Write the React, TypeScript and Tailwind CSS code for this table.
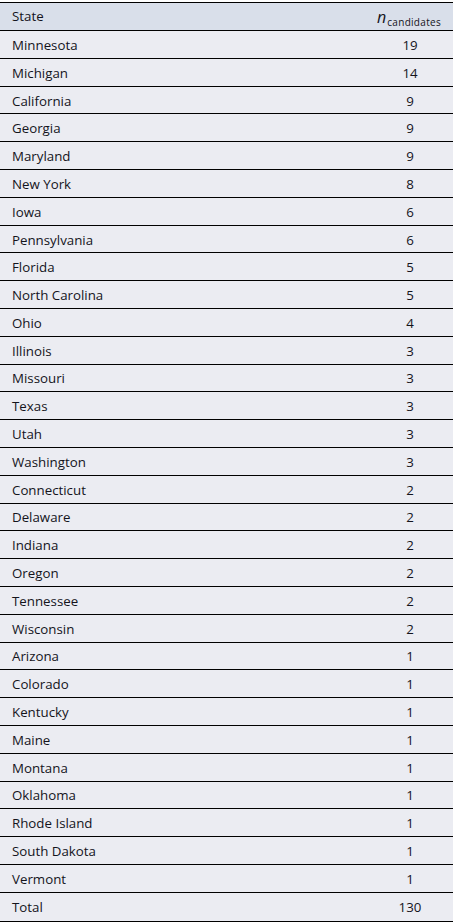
import React from 'react';

const rows: [string, number][] = [
  ['Minnesota', 19],
  ['Michigan', 14],
  ['California', 9],
  ['Georgia', 9],
  ['Maryland', 9],
  ['New York', 8],
  ['Iowa', 6],
  ['Pennsylvania', 6],
  ['Florida', 5],
  ['North Carolina', 5],
  ['Ohio', 4],
  ['Illinois', 3],
  ['Missouri', 3],
  ['Texas', 3],
  ['Utah', 3],
  ['Washington', 3],
  ['Connecticut', 2],
  ['Delaware', 2],
  ['Indiana', 2],
  ['Oregon', 2],
  ['Tennessee', 2],
  ['Wisconsin', 2],
  ['Arizona', 1],
  ['Colorado', 1],
  ['Kentucky', 1],
  ['Maine', 1],
  ['Montana', 1],
  ['Oklahoma', 1],
  ['Rhode Island', 1],
  ['South Dakota', 1],
  ['Vermont', 1],
  ['Total', 130],
];

export default function App() {
  return (
    <div className="w-[453px] h-[924px] bg-white pt-[2px] font-['Open_Sans',sans-serif] text-[13.3px] font-medium text-[#14141c]">
      <div className="border-t border-b border-black bg-[#ebecf2]">
        {/* header */}
        <div className="flex items-center h-[28px] bg-[#d9dfea] border-b border-black">
          <div className="flex-1 pl-3">State</div>
          <div className="pr-[12px] pt-[1px]">
            <span className="italic text-[16px] mr-[1px]">n</span>
            <span className="text-[10px] relative top-[3px] tracking-[0.3px]">candidates</span>
          </div>
        </div>
        {rows.map(([state, n], i) => (
          <div
            key={state}
            className={
              'flex items-center h-[27.8px] pt-[3px] ' + (i < rows.length - 1 ? 'border-b border-black' : '')
            }
          >
            <div className="flex-1 pl-3">{state}</div>
            <div className="w-[86px] text-center">{n}</div>
          </div>
        ))}
      </div>
    </div>
  );
}
